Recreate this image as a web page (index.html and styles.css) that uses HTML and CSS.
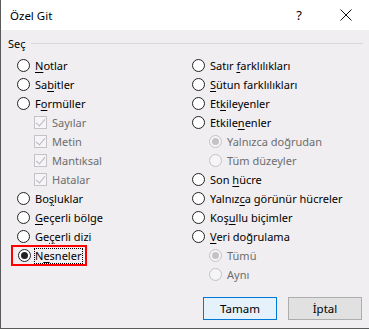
FILE: index.html
```html
<!DOCTYPE html>
<html lang="tr">
<head>
<meta charset="utf-8">
<title>Özel Git</title>
<link rel="stylesheet" href="styles.css">
</head>
<body>
<div class="dialog">
  <div class="titlebar">
    <span class="title">Özel Git</span>
    <span class="help">?</span>
    <svg class="close" width="12" height="12" viewBox="0 0 12 12"><path d="M0.5 0.5 L11.5 11.5 M11.5 0.5 L0.5 11.5" stroke="#111" stroke-width="1" fill="none"/></svg>
  </div>
  <div class="content">
    <div class="group-head"><span>Seç</span><i class="rule"></i></div>
    <div class="cols">
      <div class="col">
        <div class="row"><span class="radio"></span><span><u>N</u>otlar</span></div>
        <div class="row"><span class="radio"></span><span>Sa<u>b</u>itler</span></div>
        <div class="row"><span class="radio"></span><span>F<u>o</u>rmüller</span></div>
        <div class="row sub dis"><span class="check"></span><span>Sayılar</span></div>
        <div class="row sub dis"><span class="check"></span><span>Metin</span></div>
        <div class="row sub dis"><span class="check"></span><span>Mantıksal</span></div>
        <div class="row sub dis"><span class="check"></span><span>Hatalar</span></div>
        <div class="row"><span class="radio"></span><span>Bo<u>ş</u>luklar</span></div>
        <div class="row"><span class="radio"></span><span><u>G</u>eçerli bölge</span></div>
        <div class="row"><span class="radio"></span><span>Ge<u>ç</u>erli dizi</span></div>
        <div class="row selected"><span class="radio on"></span><span class="focus">N<u>e</u>sneler</span></div>
      </div>
      <div class="col">
        <div class="row"><span class="radio"></span><span>Satır <u>f</u>arklılıkları</span></div>
        <div class="row"><span class="radio"></span><span><u>S</u>ütun farklılıkları</span></div>
        <div class="row"><span class="radio"></span><span>Et<u>k</u>ileyenler</span></div>
        <div class="row"><span class="radio"></span><span>Etkile<u>n</u>enler</span></div>
        <div class="row sub dis"><span class="radio on"></span><span>Yalnızca doğrudan</span></div>
        <div class="row sub dis"><span class="radio"></span><span>Tüm düzeyler</span></div>
        <div class="row"><span class="radio"></span><span>Son <u>h</u>ücre</span></div>
        <div class="row"><span class="radio"></span><span>Yalnız<u>c</u>a görünür hücreler</span></div>
        <div class="row"><span class="radio"></span><span>Koş<u>u</u>llu biçimler</span></div>
        <div class="row"><span class="radio"></span><span><u>V</u>eri doğrulama</span></div>
        <div class="row sub dis"><span class="radio on"></span><span>Tümü</span></div>
        <div class="row sub dis"><span class="radio"></span><span>Aynı</span></div>
      </div>
    </div>
    <div class="buttons">
      <button class="btn default">Tamam</button>
      <button class="btn">İptal</button>
    </div>
  </div>
</div>
</body>
</html>
```
FILE: styles.css
```css
* { box-sizing: border-box; }
html, body { margin: 0; padding: 0; }
body {
  width: 369px;
  height: 329px;
  overflow: hidden;
  font-family: "Noto Sans", "Open Sans", sans-serif;
  font-size: 11px;
  color: #000;
  background: #f0eef1;
}
.dialog {
  width: 369px;
  height: 329px;
  border-left: 1px solid #5a5a5a;
  border-bottom: 1px solid #5a5a5a;
  display: flex;
  flex-direction: column;
}
.titlebar {
  height: 30px;
  background: #fff;
  display: flex;
  align-items: center;
  padding-left: 9px;
  flex: none;
}
.title { font-size: 11.5px; flex: 1; }
.help { font-size: 13px; margin-right: 38px; }
.close { margin-right: 17px; }
.content {
  flex: 1;
  padding: 5px 6px 0 7px;
  display: flex;
  flex-direction: column;
}
.group-head {
  display: flex;
  align-items: center;
  height: 16px;
  gap: 5px;
}
.rule { flex: 1; height: 1px; background: #d8d6da; margin-top: 1px; }
.cols {
  display: flex;
  margin-top: 5px;
  padding-left: 9px;
}
.col { display: flex; flex-direction: column; }
.col:first-child { width: 175px; }
.row {
  height: 19px;
  display: flex;
  align-items: center;
  gap: 5px;
  white-space: nowrap;
}
.row.sub { padding-left: 17px; }
.dis { color: #6d6d6d; }
.radio {
  width: 13px;
  height: 13px;
  border: 1px solid #222;
  border-radius: 50%;
  background: #fff;
  flex: none;
  display: flex;
  align-items: center;
  justify-content: center;
}
.radio.on::after {
  content: "";
  width: 7px;
  height: 7px;
  border-radius: 50%;
  background: #222;
}
.dis .radio { border-color: #c4c2c6; background: #f5f4f6; }
.dis .radio.on::after { background: #c4c2c6; }
.check {
  width: 13px;
  height: 13px;
  border: 1px solid #c4c2c6;
  background: #f5f4f6;
  flex: none;
  position: relative;
}
.check::after {
  content: "";
  position: absolute;
  left: 3px;
  top: 0px;
  width: 4px;
  height: 8px;
  border-right: 1px solid #b8b6ba;
  border-bottom: 1px solid #b8b6ba;
  transform: rotate(40deg);
}
.selected {
  margin-left: -6px;
  padding-left: 5px;
  width: 76px;
  border: 2px solid #f00;
  height: 21px;
  margin-top: -1px;
  gap: 4px;
}
.focus { outline: 1px dotted #000; outline-offset: 0; line-height: 14px; padding-right: 1px; }
u { text-decoration-thickness: 1px; text-underline-offset: 2px; }
.buttons {
  margin-top: auto;
  margin-bottom: 8px;
  display: flex;
  justify-content: flex-end;
  gap: 11px;
  padding-right: 1px;
}
.btn {
  width: 74px;
  height: 23px;
  font-family: inherit;
  font-size: 11.5px;
  color: #000;
  background: #e1e1e1;
  border: 1px solid #adadad;
  padding: 0;
}
.btn.default {
  background: #e5f1fb;
  border: 1px solid #0078d7;
}
```
